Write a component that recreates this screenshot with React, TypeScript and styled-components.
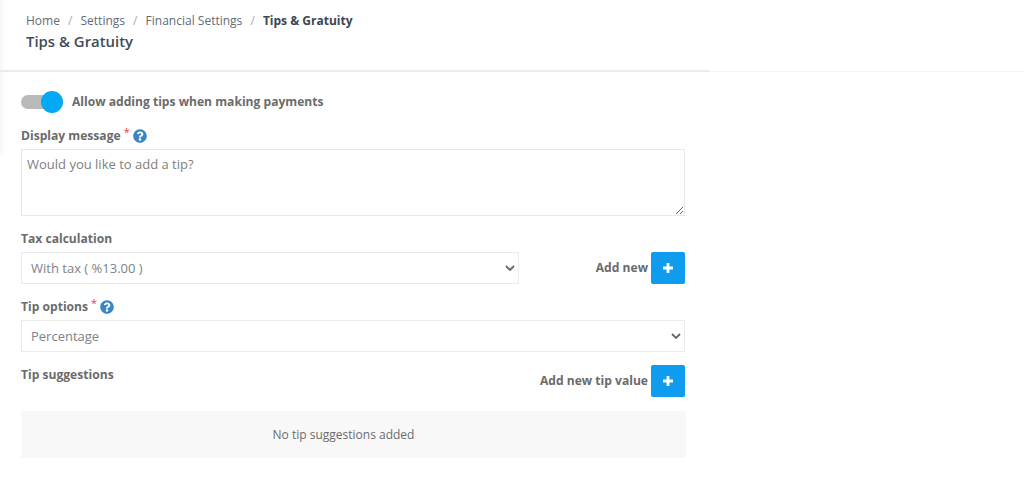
import React from 'react';
import styled, { createGlobalStyle } from 'styled-components';
import { FaQuestionCircle } from 'react-icons/fa';

const GlobalStyle = createGlobalStyle`
  html, body {
    margin: 0;
    background: #fff;
    font-family: "Open Sans", "Liberation Sans", sans-serif;
  }
`;

const Page = styled.div`
  position: relative;
  width: 1024px;
  height: 478px;
  overflow: hidden;

  /* faint edge of the side menu */
  &::before {
    content: '';
    position: absolute;
    top: 0;
    left: 0;
    width: 5px;
    height: 155px;
    background: linear-gradient(90deg, #f6f6f6, #fff);
  }
`;

const Header = styled.header`
  position: relative;
  box-sizing: border-box;
  height: 72px;
  padding: 12px 0 0 26px;
  border-bottom: 1px solid #f3f4f5;

  &::after {
    content: '';
    position: absolute;
    left: 0;
    bottom: -1px;
    width: 709px;
    height: 2px;
    background: #e9ecee;
  }
`;

const Crumbs = styled.ol`
  display: flex;
  margin: 0;
  padding: 0;
  list-style: none;
  font-size: 12px;
  line-height: 17px;
  color: #5f6b76;

  li + li::before {
    content: '/';
    padding: 0 8.1px;
    font-weight: 400;
    color: #a5adb5;
  }
`;

const Crumb = styled.li<{ $active?: boolean }>`
  font-weight: ${(p) => (p.$active ? 700 : 400)};
  color: ${(p) => (p.$active ? '#3a4654' : '#5f6b76')};
`;

const Title = styled.h1`
  margin: 2px 0 0;
  font-size: 14.9px;
  line-height: 20px;
  font-weight: 600;
  color: #3f4b59;
`;

const Form = styled.form`
  display: flex;
  flex-direction: column;
  width: 664px;
  margin-left: 21px;
  padding-top: 18px;
`;

const ToggleRow = styled.div`
  display: flex;
  align-items: center;
  gap: 10px;
  height: 24px;
`;

const Toggle = styled.span`
  position: relative;
  display: block;
  width: 34px;
  height: 14px;
  margin-right: 7px;
  border-radius: 7px;
  background: #b9b9b9;

  &::after {
    content: '';
    position: absolute;
    top: -4px;
    right: -8px;
    width: 22px;
    height: 22px;
    border-radius: 50%;
    background: #03a9f4;
  }
`;

const Label = styled.span`
  font-size: 12.1px;
  line-height: 16px;
  font-weight: 700;
  color: #6b6b6b;
`;

const LabelRow = styled.div<{ $top: number }>`
  display: flex;
  align-items: center;
  height: 16px;
  margin-top: ${(p) => p.$top}px;
`;

const Required = styled.sup`
  align-self: flex-start;
  margin: -2px 0 0 3px;
  font-size: 11px;
  line-height: 12px;
  font-weight: 400;
  color: #e8424f;
`;

const HelpIcon = styled(FaQuestionCircle)`
  width: 14px;
  height: 14px;
  margin-left: 3px;
  color: #3b85c4;
`;

const Message = styled.textarea`
  box-sizing: border-box;
  display: block;
  width: 664px;
  height: 67px;
  margin-top: 5px;
  padding: 5px;
  border: 1px solid #e8e8e8;
  outline: none;
  border-radius: 0;
  font: 400 13px/18px "Open Sans", sans-serif;
  color: #808080;
`;

const SelectRow = styled.div`
  display: flex;
  align-items: center;
  justify-content: space-between;
  margin-top: 5px;
`;

const Select = styled.select<{ $width: number }>`
  box-sizing: border-box;
  display: block;
  width: ${(p) => p.$width}px;
  height: 32px;
  padding: 0 9px;
  border: 1px solid #ebebeb;
  border-radius: 0;
  outline: none;
  appearance: none;
  background: #fff
    url("data:image/svg+xml,%3Csvg xmlns='http://www.w3.org/2000/svg' width='10' height='6'%3E%3Cpath d='M1 1l4 4 4-4' fill='none' stroke='%23666' stroke-width='1.8'/%3E%3C/svg%3E")
    no-repeat right 3px center;
  font: 400 13px "Open Sans", sans-serif;
  color: #7b838b;
`;

const AddGroup = styled.div`
  display: flex;
  align-items: center;
  gap: 3px;
`;

const AddButton = styled.button`
  display: flex;
  align-items: center;
  justify-content: center;
  width: 34px;
  height: 32px;
  padding: 0;
  border: none;
  border-radius: 2px;
  background: #0f9bee;
  cursor: pointer;
`;

const SuggestionsRow = styled.div`
  display: flex;
  align-items: flex-start;
  justify-content: space-between;
  margin-top: 13px;

  > span {
    padding-top: 2px;
  }
`;

const Empty = styled.div`
  display: flex;
  align-items: center;
  justify-content: center;
  width: 665px;
  height: 47px;
  margin-top: 14px;
  padding-right: 20px;
  box-sizing: border-box;
  background: #f8f8f8;
  font-size: 12px;
  color: #6b6b6b;
`;

const Plus = () => (
  <svg width="10" height="10" viewBox="0 0 10 10" aria-hidden="true">
    <path d="M5 0v10M0 5h10" stroke="#fff" strokeWidth="2.8" />
  </svg>
);

export default function App() {
  return (
    <>
      <GlobalStyle />
      <Page>
        <Header>
          <Crumbs>
            <Crumb>Home</Crumb>
            <Crumb>Settings</Crumb>
            <Crumb>Financial Settings</Crumb>
            <Crumb $active>Tips &amp; Gratuity</Crumb>
          </Crumbs>
          <Title>Tips &amp; Gratuity</Title>
        </Header>
        <Form>
          <ToggleRow>
            <Toggle />
            <Label>Allow adding tips when making payments</Label>
          </ToggleRow>
          <LabelRow $top={14}>
            <Label>Display message</Label>
            <Required>*</Required>
            <HelpIcon />
          </LabelRow>
          <Message defaultValue="Would you like to add a tip?" />
          <LabelRow $top={15}>
            <Label>Tax calculation</Label>
          </LabelRow>
          <SelectRow>
            <Select $width={498}>
              <option>With tax ( %13.00 )</option>
            </Select>
            <AddGroup>
              <Label>Add new</Label>
              <AddButton type="button">
                <Plus />
              </AddButton>
            </AddGroup>
          </SelectRow>
          <LabelRow $top={15}>
            <Label>Tip options</Label>
            <Required>*</Required>
            <HelpIcon />
          </LabelRow>
          <SelectRow>
            <Select $width={664}>
              <option>Percentage</option>
            </Select>
          </SelectRow>
          <SuggestionsRow>
            <Label>Tip suggestions</Label>
            <AddGroup>
              <Label>Add new tip value</Label>
              <AddButton type="button">
                <Plus />
              </AddButton>
            </AddGroup>
          </SuggestionsRow>
          <Empty>No tip suggestions added</Empty>
        </Form>
      </Page>
    </>
  );
}
